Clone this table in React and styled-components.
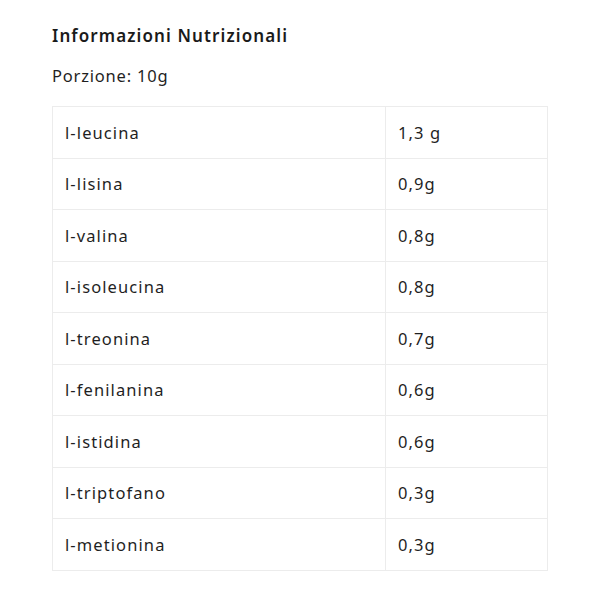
import React from 'react'
import styled, { createGlobalStyle } from 'styled-components'

const GlobalStyle = createGlobalStyle`
  body {
    margin: 0;
    background: #fff;
    font-family: "Noto Sans", Lato, sans-serif;
    color: #1f1f1f;
  }
`

const Wrapper = styled.div`
  padding: 24px 52px 0 52px;
`

const Title = styled.h3`
  margin: 0;
  font-size: 17px;
  font-weight: 600;
  letter-spacing: 1.1px;
  line-height: 24px;
  color: #1a1a1a;
`

const Portion = styled.p`
  margin: 16px 0 18px;
  font-size: 16.5px;
  line-height: 24px;
  letter-spacing: 0.8px;
`

const Table = styled.table`
  width: 496px;
  border-collapse: collapse;
`

const Cell = styled.td`
  border: 1px solid #ececec;
  height: 51.5px;
  padding: 0 12px;
  font-size: 16.5px;
  letter-spacing: 1.1px;
  width: ${p => p.$w || 'auto'};
  box-sizing: border-box;
`

const rows = [
  ['l-leucina', '1,3 g'],
  ['l-lisina', '0,9g'],
  ['l-valina', '0,8g'],
  ['l-isoleucina', '0,8g'],
  ['l-treonina', '0,7g'],
  ['l-fenilanina', '0,6g'],
  ['l-istidina', '0,6g'],
  ['l-triptofano', '0,3g'],
  ['l-metionina', '0,3g'],
]

export default function App() {
  return (
    <>
      <GlobalStyle />
      <Wrapper>
        <Title>Informazioni Nutrizionali</Title>
        <Portion>Porzione: 10g</Portion>
        <Table>
          <tbody>
            {rows.map(([name, qty]) => (
              <tr key={name}>
                <Cell $w="333px">{name}</Cell>
                <Cell>{qty}</Cell>
              </tr>
            ))}
          </tbody>
        </Table>
      </Wrapper>
    </>
  )
}
